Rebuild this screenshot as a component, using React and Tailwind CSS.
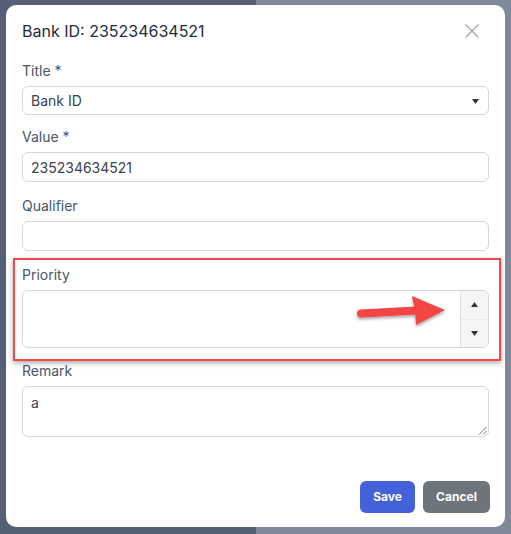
import React from 'react';

function Field({ label, children, className = '' }) {
  return (
    <div className={className}>
      <label className="block h-5 text-[14px] leading-5 text-[#4a5568] mb-[5px]">{label}</label>
      {children}
    </div>
  );
}

export default function App() {
  return (
    <div
      className="w-[511px] h-[534px] pt-[5px] pl-[6px] bg-[linear-gradient(to_right,#536075_256px,#7e8999_256px)] font-['Inter',sans-serif]"
    >
      <div className="w-[499px] h-[522px] bg-white rounded-[10px] px-4 pt-[14px] flex flex-col">
        {/* Header */}
        <div className="flex items-center justify-between h-6 mb-[18px]">
          <h2 className="text-[16px] leading-6 text-[#1f2a3c]">Bank ID: 235234634521</h2>
          <button className="w-[14px] h-[14px] mr-[10px] text-[#a0a7b1]">
            <svg viewBox="0 0 14 14" width="14" height="14" fill="none" stroke="currentColor" strokeWidth="1.4">
              <path d="M0.5 0.5 L13.5 13.5 M13.5 0.5 L0.5 13.5" />
            </svg>
          </button>
        </div>

        {/* Title select */}
        <Field label="Title *" className="mb-[12px]">
          <div className="relative h-[29px] w-[467px] border border-[#d4d7dc] rounded-[6px] flex items-center pl-[8px] text-[14px] text-[#3b4250]">
            Bank ID
            <svg className="absolute right-[9px] top-[12px]" width="7" height="5" viewBox="0 0 7 5">
              <path d="M0 0 H7 L3.5 5 Z" fill="#333" />
            </svg>
          </div>
        </Field>

        {/* Value */}
        <Field label="Value *" className="mb-[14px]">
          <div className="h-[30px] w-[467px] border border-[#d4d7dc] rounded-[6px] flex items-center pl-[8px] text-[14px] text-[#3b4250]">
            235234634521
          </div>
        </Field>

        {/* Qualifier */}
        <Field label="Qualifier" className="mb-[14px]">
          <div className="h-[30px] w-[467px] border border-[#d4d7dc] rounded-[6px]" />
        </Field>

        {/* Priority with annotation */}
        <div className="relative mb-[13px]">
          <Field label="Priority">
            <div className="h-[58px] w-[467px] border border-[#d4d7dc] rounded-[6px] flex justify-end overflow-hidden">
              <div className="w-[28px] h-full border-l border-[#e1e3e6] bg-[#f5f5f6] flex flex-col">
                <div className="flex-1 flex items-center justify-center border-b border-[#e8e9eb]">
                  <svg width="7" height="5" viewBox="0 0 7 5"><path d="M0 5 H7 L3.5 0 Z" fill="#333" /></svg>
                </div>
                <div className="flex-1 flex items-center justify-center">
                  <svg width="7" height="5" viewBox="0 0 7 5"><path d="M0 0 H7 L3.5 5 Z" fill="#333" /></svg>
                </div>
              </div>
            </div>
          </Field>
          {/* red highlight box */}
          <div className="absolute left-[-9px] top-[-7px] w-[488px] h-[103px] border-2 border-[#f24848] shadow-[0_2px_5px_rgba(0,0,0,0.35)] pointer-events-none" />
          {/* red arrow */}
          <svg className="absolute left-[330px] top-[28px] pointer-events-none overflow-visible" width="100" height="40" viewBox="0 0 100 40">
            <defs>
              <filter id="sh" x="-20%" y="-40%" width="140%" height="180%">
                <feDropShadow dx="0" dy="2" stdDeviation="1.6" floodColor="#000" floodOpacity="0.35" />
              </filter>
            </defs>
            <g filter="url(#sh)" fill="#f44444">
              <path d="M9 20.5 L64 17.5" stroke="#f44444" strokeWidth="8" strokeLinecap="round" />
              <path d="M60 3 L93 17 L64 32 L63 18 Z" />
            </g>
          </svg>
        </div>

        {/* Remark */}
        <Field label="Remark">
          <div className="relative h-[51px] w-[467px] border border-[#d4d7dc] rounded-[6px] pl-[8px] pt-[5px] text-[14px] text-[#3b4250]">
            a
            <svg className="absolute right-[1px] bottom-[1px]" width="9" height="9" viewBox="0 0 9 9" stroke="#666" strokeWidth="0.9">
              <path d="M8.5 1 L1 8.5 M8.5 5 L5 8.5" />
            </svg>
          </div>
        </Field>

        {/* Footer */}
        <div className="flex justify-end gap-2 mt-[44px] mr-[-1px]">
          <button className="w-[55px] h-[32px] rounded-[6px] bg-[#4362d9] text-white text-[12px] font-bold">Save</button>
          <button className="w-[67px] h-[32px] rounded-[6px] bg-[#6e747b] text-white text-[12px] font-bold">Cancel</button>
        </div>
      </div>
    </div>
  );
}
